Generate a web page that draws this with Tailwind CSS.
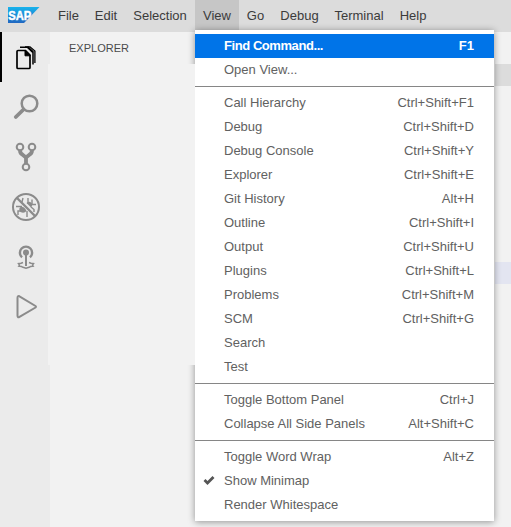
<!DOCTYPE html>
<html lang="en">
<head>
<meta charset="utf-8">
<title>SAP IDE</title>
<script src="https://cdn.jsdelivr.net/npm/@tailwindcss/browser@4"></script>
</head>
<body class="relative w-[511px] h-[527px] overflow-hidden bg-[#f2f2f2] font-['Liberation_Sans',Arial,sans-serif] text-[13px] text-[#616161]">
<div class="flex h-full flex-col">
  <header class="flex h-8 shrink-0 items-stretch bg-[#dcdcdc] text-[#3b3b3b]">
    <svg class="ml-2 mt-[7px] mr-[10px] h-4 w-8 shrink-0" viewBox="0 0 32 16">
      <defs><linearGradient id="sap" x1="0" y1="0" x2="0" y2="1"><stop offset="0" stop-color="#18b3ec"/><stop offset="1" stop-color="#2167c1"/></linearGradient></defs>
      <path d="M0 0H31.500L16 16H0Z" fill="url(#sap)"/>
      <text x="0.300" y="12.500" font-family="Liberation Sans, Arial, sans-serif" font-weight="700" font-size="13" textLength="23" lengthAdjust="spacingAndGlyphs" fill="#fff" stroke="#fff" stroke-width=".5">SAP</text>
    </svg>
    <nav class="flex leading-[31px]">
      <span class="w-[37px] text-center">File</span>
      <span class="w-[38px] text-center">Edit</span>
      <span class="w-[70px] text-center">Selection</span>
      <span class="w-[44px] bg-[#c6c6c6] text-center">View</span>
      <span class="w-[33px] text-center">Go</span>
      <span class="w-[55px] text-center">Debug</span>
      <span class="w-[64px] text-center">Terminal</span>
      <span class="w-[44px] text-center">Help</span>
    </nav>
  </header>
  <div class="flex min-h-0 flex-1">
    <aside class="w-[50px] shrink-0 bg-[#ebebeb]">
      <svg class="h-[50px] w-[50px] border-l-2 border-black" viewBox="2 32 48 50" fill="none" stroke="#000" stroke-width="1.700"><path d="M18 50.500H25.500L30 55V67.500Q30 68.500 29 68.500H18Q17 68.500 17 67.500V51.500Q17 50.500 18 50.500Z"/><path d="M25 50.500L30.300 55.800H25Z" fill="#000" stroke-width="1"/><path d="M20 47.200H28L33 52V64.500" stroke-width="1.500"/><path d="M27.500 47L33 52.300" stroke-width="2"/><path d="M25 46.800H30L34.900 51V63" stroke-width="1.300"/></svg>
      <svg class="h-[245px] w-[50px]" viewBox="0 82 50 245" fill="none" stroke="#8b8b8b" stroke-width="2">
        <circle cx="29.500" cy="103.500" r="7.800" stroke-width="2.500"/><path d="M23.500 109.500L15.800 117" stroke-width="3.800" stroke-linecap="round"/>
        <circle cx="20" cy="147" r="3.300"/><circle cx="32" cy="147" r="3.300"/><circle cx="26" cy="167" r="3.300"/>
        <path d="M20 150.500Q20 153.500 23 155L26 157.500L29 155Q32 153.500 32 150.500M26 157V164" stroke-width="3.800"/>
        <circle cx="26" cy="207" r="13"/><path d="M17 198L35 216" stroke-width="2.400"/>
        <path d="M20.500 207Q24 206 26.500 211Q24 214 20.500 212Q18 209 20.500 207Z" fill="#8b8b8b" stroke="none"/><path d="M26.500 203Q29 200.500 31.500 203Q33 205 31 207.500Z" fill="#8b8b8b" stroke="none"/>
        <path d="M16 206.500H22M18 215V211H21M27 217V211M30.500 204.500H36M28 204V198M32 204V199.500M22 202L23 198M31 207L34 209.500V212" stroke-width="1.400"/>
        <path d="M22 257.300A6.100 6.100 0 1 1 30 257.300" stroke-width="2.400"/><circle cx="26" cy="252.500" r="3" fill="#8b8b8b" stroke="none"/><path d="M26 253V266" stroke-width="2"/>
        <path d="M23 262.500L21 263.200L18.500 263.500L19.500 265L18.800 266.200L21.500 266.500L23 267.300L26 268.300L29 267.300L30.500 266.500L33.200 266.200L32.500 265L33.500 263.500L31 263.200L29 262.500" stroke-width="1.500"/>
        <path d="M17.500 298V315.500Q17.500 318 19.500 316.800L35.500 307.500Q36.500 306.700 35.500 306L19.500 296.300Q17.500 295.500 17.500 298Z"/>
      </svg>
    </aside>
    <section class="flex-1 pt-[9px] pl-[19px] text-[11px] leading-[15px] text-[#4a4a4a]">EXPLORER</section>
    <div class="w-4">
      <div class="mt-8 h-[22px] bg-[#dcdcdc]"></div>
      <div class="mt-[176px] h-[22px] bg-[#e3e5f1]"></div>
    </div>
  </div>
</div>
<div class="absolute top-[30px] left-[195px] h-[491px] w-[299px] shadow-[0_1px_7px_rgba(0,0,0,0.4)]"></div>
<div class="absolute top-16 left-12 h-[301px] w-[147px] bg-[#f2f2f2]"></div>
<main class="absolute top-[30px] left-[195px] w-[299px] bg-white py-1 leading-6 [&>div]:flex [&>div]:h-6 [&>div]:justify-between [&>div]:pl-[29px] [&>div]:pr-[20px] [&>hr]:my-1 [&>hr]:border-[#868686]">
  <div class="bg-[#0074e8] font-bold text-white"><span class="tracking-[-0.43px]">Find Command...</span><span>F1</span></div>
  <div><span>Open View...</span></div>
  <hr>
  <div><span>Call Hierarchy</span><span>Ctrl+Shift+F1</span></div>
  <div><span>Debug</span><span>Ctrl+Shift+D</span></div>
  <div><span>Debug Console</span><span>Ctrl+Shift+Y</span></div>
  <div><span>Explorer</span><span>Ctrl+Shift+E</span></div>
  <div><span>Git History</span><span>Alt+H</span></div>
  <div><span>Outline</span><span>Ctrl+Shift+I</span></div>
  <div><span>Output</span><span>Ctrl+Shift+U</span></div>
  <div><span>Plugins</span><span>Ctrl+Shift+L</span></div>
  <div><span>Problems</span><span>Ctrl+Shift+M</span></div>
  <div><span>SCM</span><span>Ctrl+Shift+G</span></div>
  <div><span>Search</span></div>
  <div><span>Test</span></div>
  <hr>
  <div><span>Toggle Bottom Panel</span><span>Ctrl+J</span></div>
  <div><span>Collapse All Side Panels</span><span>Alt+Shift+C</span></div>
  <hr>
  <div><span>Toggle Word Wrap</span><span>Alt+Z</span></div>
  <div class="relative"><svg class="absolute top-[6px] left-2 h-[10px] w-3" viewBox="0 0 12 10"><path d="M1.500 5L4.500 8L10.500 2" fill="none" stroke="#555" stroke-width="2.800"/></svg><span>Show Minimap</span></div>
  <div><span>Render Whitespace</span></div>
</main>
</body>
</html>
